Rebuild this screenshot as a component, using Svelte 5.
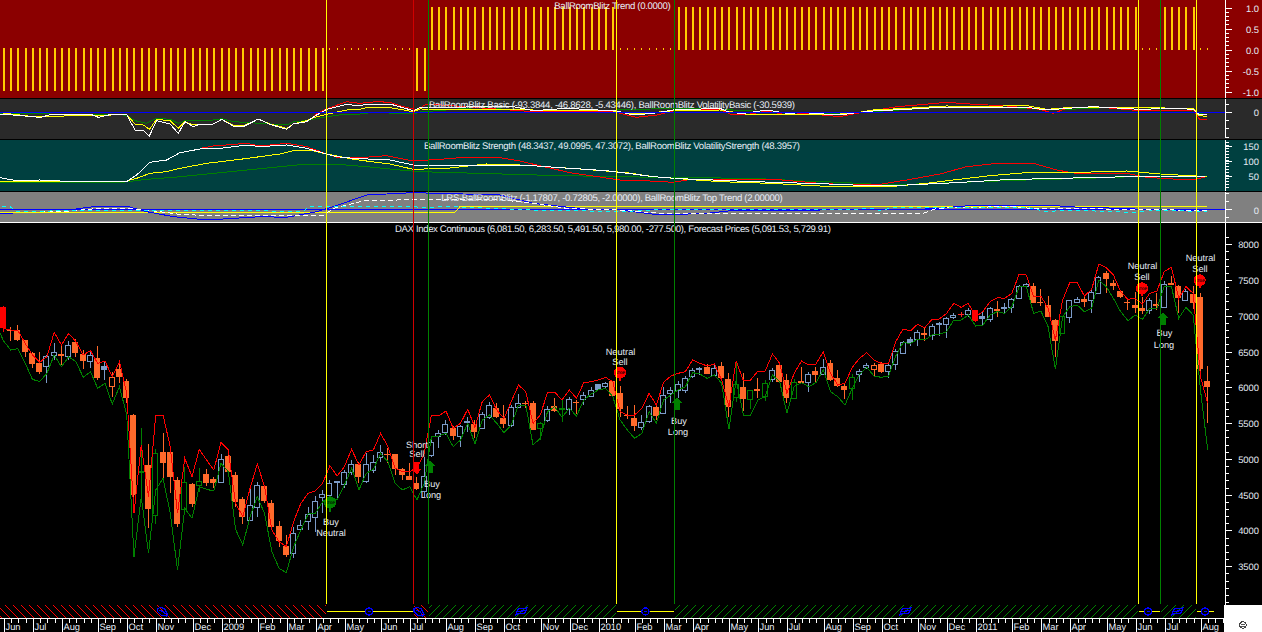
<script lang="ts">
  // DAX weekly chart with the BallRoomBlitz indicator panes.
  // Prices and lines are kept in page pixels: each table is measured from a
  // 3x crop, so sec()/seg() scale it back and add the crop offset.
  const step = 7.255;
  const cx = (i: number) => Math.floor(3.4 + step * i);

  const sec = (off: number, rows: any[]) =>
    rows.map(([t, a, b, c, d]) => ({
      t,
      wt: off + a / 3,
      bt: off + b / 3,
      bb: off + c / 3,
      wb: off + d / 3,
    }));

  const candles = [
    ...sec(300, [
      ["r",18,22,85,95],["o",80,90,94,122],["o",75,90,120,122],["o",120,120,155,170],["o",155,160,192,205],
      ["o",155,190,217,222],["h",165,168,200,248],["h",130,157,167,180],["o",135,162,167,195],["h",122,137,170,180],
      ["o",118,127,158,170],["o",150,162,183,208],["h",155,167,184,205],["o",138,175,235,240],["s",185,198,210,240],
      ["x",215,232,260,290],["o",185,207,232,248],["o",238,243,293,310],["o",343,345,585,640],["g",385,514,516,590],
      ["o",432,495,627,685],["g",448,460,645,672],["o",400,456,488,545],["o",440,456,530,578],["o",530,540,672,680],
      ["g",500,547,627,635],["o",550,552,612,622],["g",505,544,556,575],["o",508,522,550,558],["o",530,537,548,565],
      ["h",462,478,547,550],["o",458,468,515,520],["o",517,525,605,620],["o",590,598,650,672],["h",565,616,661,662],
      ["h",545,556,622,650],["o",555,558,603,608],["o",600,610,682,690],["o",662,678,722,740],["o",705,739,764,770],
      ["h",680,700,761,775],["h",660,676,688,695],["h",620,644,665,690],["h",588,604,652,695],
    ]),
    ...sec(340, [
      ["h",450,463,473,520],["h",420,430,467,500],["h",425,425,427,480],["h",390,398,433,445],["h",360,373,398,405],
      ["o",365,372,410,428],["h",340,373,425,428],["h",345,368,392,400],["h",315,338,353,365],["o",325,341,344,368],
      ["o",342,342,388,405],["o",385,388,405,420],["o",370,408,420,420],["o",410,428,446,450],["h",350,410,455,470],
      ["h",290,307,347,350],["h",270,280,290,325],["h",240,253,278,285],["o",258,265,288,300],["h",255,258,290,320],
      ["h",230,245,248,275],["o",240,252,276,295],["h",215,223,266,266],["h",185,195,233,238],["o",190,205,230,235],
      ["o",195,234,251,265],["h",195,202,255,262],["h",162,190,202,205],["o",182,189,193,205],["o",182,190,270,270],
      ["g",245,250,265,300],["h",198,208,242,245],["o",175,198,212,215],["g",180,204,206,245],["h",170,178,207,225],
      ["o",180,185,190,222],["h",155,166,179,195],["h",140,150,168,172],["s",133,133,149,150],["h",125,130,140,148],
      ["o",122,123,168,170],["o",137,160,207,232],["o",198,224,226,238],["o",195,234,258,272],["h",225,247,261,270],
      ["h",195,199,243,250],["o",198,202,227,240],["h",140,167,219,222],["h",142,150,160,190],["h",122,132,150,175],
    ]),
    ...sec(280, [
      ["h",288,295,330,340],["h",265,270,290,295],["h",262,264,267,285],["o",252,260,281,283],["h",255,265,285,285],
      ["o",245,258,293,295],["o",278,297,381,412],["g",248,313,352,365],["o",280,322,358,392],["g",330,332,358,388],
      ["o",293,327,334,355],["g",300,310,350,362],["h",265,272,298,305],["o",245,255,306,308],["o",282,300,353,368],
      ["g",298,307,356,358],["o",262,303,308,310],["h",275,283,308,337],["o",262,273,285,310],["h",238,262,282,285],
      ["o",240,250,299,302],["o",270,295,318,320],["o",310,318,329,357],["g",282,292,326,360],["h",267,274,284,305],
      ["h",250,256,263,268],["x",250,257,268,288],["o",245,252,276,278],["h",250,256,275,295],["h",208,215,253,270],
      ["h",183,188,220,222],["s",172,178,188,198],["h",150,157,178,198],["o",140,158,165,182],["h",132,138,165,180],
      ["s",125,130,136,168],["h",112,115,134,175],["h",98,106,113,118],["R",95,102,104,112],["h",85,92,104,110],
    ]),
    ...sec(230, [
      ["r",240,240,272,275],["s",245,257,266,288],["h",232,235,268,275],["o",212,238,243,260],["h",218,231,233,248],
      ["h",205,208,233,248],["h",165,170,205,205],["h",158,163,170,172],["o",160,168,218,220],["o",178,217,219,228],
      ["o",198,225,260,262],["o",268,270,332,380],["g",258,258,310,312],["h",210,211,263,280],["h",200,207,217,220],
      ["o",198,207,216,232],["h",180,187,212,250],["h",138,142,190,192],["o",122,128,147,190],["o",150,160,167,180],
      ["o",180,183,200,205],["o",208,216,218,240],["o",185,226,233,250],["o",200,233,243,252],["h",205,210,242,252],
      ["o",190,223,229,240],["h",152,163,231,232],["o",138,160,164,165],["o",165,168,203,250],["h",178,184,211,214],
      ["o",168,192,219,238],["o",190,201,416,440],["o",408,453,472,578],
    ]),
  ];

  const band = (x0y: number[], off: number[][]) => {
    const ys = off.flatMap(([o, ...vals]) => vals.map((v) => o + v / 3));
    return [x0y, ...ys.map((y, i) => [3.4 + step * i, y])].map((p) => p.join(",")).join(" ");
  };

  const redBand = band([0, 322], [
    [300,85,90,92,130,165,187,170,97,135,100,125,165,152,190,183,230,185,280,640,435,590,345,345,440,640,475,530,448,480,510,427,450,610,650,565,492,560,690,725,740,665,610,580,573,550],
    [340,377,408,380,328,375,335,330,280,320,385,395,395,385,340,225,228,213,265,250,208,262,185,165,210,235,185,135,155,250,225,158,157,180,150,175,128,125,120,112,125,215,225,225,205,160,195,127,108,100],
    [280,275,240,250,258,252,300,380,243,302,300,273,273,222,250,340,280,243,255,252,215,280,315,310,262,235,218,240,250,250,185,147,153,133,143,118,117,100,70,82,70],
    [230,260,245,215,203,205,190,133,135,200,198,235,330,210,157,157,198,178,102,113,135,185,208,205,222,190,183,125,112,205,170,190,440,520],
  ]);
  const greenBand = band([0, 333], [
    [300,122,150,146,190,238,245,220,165,200,170,185,232,215,265,250,312,260,345,770,590,760,570,535,640,810,625,655,560,568,573,490,515,688,735,650,590,640,755,805,818,740,690,642,640,605],
    [340,470,480,435,385,450,400,388,340,365,430,450,440,480,430,290,288,280,320,300,250,312,240,225,250,278,255,195,195,315,295,215,200,232,205,228,180,162,150,145,170,240,270,295,280,215,250,180,165,150],
    [280,320,278,282,295,285,310,448,300,405,405,360,350,285,305,400,320,308,320,308,270,335,350,375,325,283,262,288,292,288,228,188,190,178,180,165,163,155,120,120,105],
    [230,288,285,255,245,250,230,170,170,250,243,290,418,260,230,225,245,235,150,170,205,245,272,255,268,235,235,170,170,265,232,255,480,660],
  ]);

  // indicator lines: one string per 3x crop, crop origin 0 / 420 / 840
  function seg(...parts: string[]) {
    let last = -1;
    const out: string[] = [];
    parts.forEach((s, k) => {
      for (const p of s.trim().split(/\s+/)) {
        const [a, b] = p.split(",").map(Number);
        const x = k * 420 + a / 3;
        if (x > last) {
          out.push(x + "," + b / 3);
          last = x;
        }
      }
    });
    return out.join(" ");
  }

  const basic = [
    { c: "#008000", p: seg("0,340 370,345 385,350 405,362 440,370 470,355 510,358 535,370 555,362 640,360 665,356 700,365 860,375 880,365 920,362 980,350 1040,342 1080,342 1120,337 1240,342 1260,336", "180,322 340,335 590,330 760,325 900,328 1100,338 1260,340", "100,335 300,322 500,322 640,330 800,323 1040,325 1080,340 1100,338") },
    { c: "#ff0000", p: seg("930,360 950,340 985,325 1040,305 1080,310 1130,305 1170,307 1210,320 1250,330", "20,312 340,335 580,335 650,352 710,345 760,333 900,328 930,342 975,345 1040,333 1100,345 1150,340 1260,350", "50,340 100,332 170,320 230,315 320,307 390,312 500,318 600,328 640,340 680,325 760,320 900,332 1060,330 1080,360 1100,357") },
    { c: "#ffff00", p: seg("0,338 100,350 380,344 405,372 430,375 448,388 470,358 510,362 535,385 555,365 580,375 640,372 665,358 700,375 730,378 775,357 810,372 860,385 880,372 920,362 950,350 985,342 1040,330 1080,328 1100,323 1170,323 1240,335 1260,327", "340,330 580,333 650,342 760,332 900,330 975,342 1100,342 1260,342", "50,338 100,330 200,325 320,318 450,320 550,315 620,328 680,323 800,322 1060,325 1075,345 1100,350") },
    { c: "#ffffff", p: seg("0,342 40,345 100,350 120,353 150,344 190,345 210,342 270,342 295,352 330,344 380,344 405,390 430,392 448,408 470,362 510,372 535,400 555,365 580,380 600,372 640,372 665,358 700,378 730,380 775,357 810,373 860,388 880,372 920,365 950,345 980,328 1040,313 1080,318 1100,312 1170,312 1240,332 1260,322", "280,320 340,332 440,325 590,333 640,345 700,340 760,330 900,325 930,338 970,340 1040,330 1100,340 1150,338 1260,345", "50,338 100,333 200,328 300,322 400,322 560,322 620,330 680,325 760,320 900,328 1000,325 1060,328 1075,342 1100,345") },
  ];

  const strength = [
    { c: "#008000", p: seg("0,548 360,548 440,538 520,532 640,520 740,510 840,500 920,492 1000,492 1100,500 1200,510 1260,515", "350,525 580,530 800,533 1000,535 1150,543 1260,547", "110,553 200,553 420,545 560,540 740,535 880,530 1040,528") },
    { c: "#ff0000", p: seg("600,445 640,438 740,430 780,438 860,430 920,440 980,462 1010,472 1080,473 1160,467 1240,483", "60,478 120,473 240,473 300,483 350,495 450,518 600,540 690,543 760,547 820,537 1050,537 1200,550 1260,553", "120,553 200,540 300,522 380,500 470,490 580,490 650,510 720,522 860,520 920,532 1000,537 1070,537 1100,530") },
    { c: "#ffff00", p: seg("0,545 380,543 410,535 450,520 500,515 540,505 620,490 720,478 840,462 880,452 930,450 980,462 1060,478 1170,492 1240,508", "80,505 200,492 300,495 350,498 480,507 620,518 700,530 800,538 900,545 1050,550 1200,558 1260,558", "170,558 260,550 340,540 450,527 570,517 640,518 720,517 860,513 960,522 1050,527 1100,530") },
    { c: "#ffffff", p: seg("0,533 50,542 120,540 220,545 380,545 410,525 450,487 500,480 540,458 600,447 660,445 740,435 780,440 860,435 920,445 980,462 1010,470 1060,475 1170,480 1240,495", "200,495 350,498 450,505 560,512 700,530 780,536 1000,545 1260,553", "100,558 200,555 350,548 480,540 640,535 760,533 860,530 1100,528") },
  ];

  const lrsBlue = seg("220,628 280,620 385,620 440,635 520,650 620,660 780,650 860,652 950,635 1000,620 1100,585 1240,578", "240,585 340,610 500,628 600,630 720,645 860,640 950,630 1200,630 1260,628", "240,628 290,625 400,616 630,616 720,622 850,625 900,628 1100,632");
  const lrsWhite = seg("120,633 210,633 300,625 385,625 480,635 530,642 620,647 970,647 1000,625 1090,603 1260,598", "230,598 340,610 440,625 600,630 720,640 1260,640", "250,640 290,625 370,622 520,620 570,625 900,628 1100,632");
  const lrsCyan = seg("5,620 30,620 50,635 300,630 650,630 910,635 925,620 1240,620 1260,622", "100,620 340,630 600,635 740,628 1260,630", "100,625 120,632 160,622 560,622 620,635 680,630 880,637 960,630 1100,635");

  // Trend value per week: -1 until Apr 09, then alternating flat / long.
  const trend = candles.map((_, i) => {
    if (i <= 44 || i === 57 || i === 58) return -1;
    if (i <= 56 || (i >= 85 && i <= 92) || (i >= 157 && i <= 159) || i >= 165) return 0;
    return 1;
  });

  const months: [string, number][] = [
    ["Jun",0],["Jul",4],["Aug",8],["Sep",13],["Oct",17],["Nov",21],["Dec",26],["2009",30],["Feb",35],["Mar",39],["Apr",43],
    ["May",47],["Jun",52],["Jul",56],["Aug",61],["Sep",65],["Oct",69],["Nov",74],["Dec",78],["2010",82],["Feb",87],["Mar",91],
    ["Apr",95],["May",100],["Jun",104],["Jul",108],["Aug",113],["Sep",117],["Oct",121],["Nov",126],["Dec",130],["2011",134],
    ["Feb",139],["Mar",143],["Apr",147],["May",152],["Jun",156],["Jul",160],["Aug",165],
  ];
  const weeks = Array.from({ length: 169 }, (_, i) => i);

  const signals = [
    { x: 326.5, c: "#ffff00" }, { x: 413.5, c: "#d00000" }, { x: 428.5, c: "#008000" },
    { x: 616.5, c: "#ffff00" }, { x: 674.5, c: "#008000" }, { x: 1138.5, c: "#ffff00" },
    { x: 1160.5, c: "#008000" }, { x: 1196.5, c: "#ffff00" },
  ];

  // hatching of the position strip: 1px stair steps, 8px apart, as one path
  function hatch(spans: number[][], up: boolean) {
    let d = "";
    for (const [x0, x1] of spans) {
      for (let x = x0; x < x1; x++) {
        for (let row = 0; row < 13; row++) {
          const phase = up ? x + row - 7 : x - row - 5;
          if (((phase % 8) + 8) % 8 === 0) d += `M${x} ${605 + row}h1v1h-1z`;
        }
      }
    }
    return d;
  }
  const hatchRed = hatch([[0, 326], [414, 428]], false);
  const hatchGreen = hatch([[429, 616], [675, 1138], [1161, 1196]], true);

  const priceLabels = [8000, 7500, 7000, 6500, 6000, 5500, 5000, 4500, 4000, 3500];
  const priceY = (p: number) => 244.7 + (8000 - p) * 0.07156;
  const priceTicks = Array.from({ length: 53 }, (_, i) => 8100 - i * 100);

  const range = (from: number, to: number, d: number) => {
    const a = [];
    for (let v = from; v <= to + 0.01; v += d) a.push(v);
    return a;
  };

  const stops = [{ x: 620, y: 372.7 }, { x: 1142, y: 288.3 }, { x: 1199.7, y: 280.3 }];
  const buyArrows = [{ x: 430, y: 460 }, { x: 677, y: 397 }, { x: 1163, y: 312 }];
  const labels = [
    { x: 331, y: 524.5, t: "Buy" }, { x: 331, y: 535.5, t: "Neutral" },
    { x: 417, y: 447.5, t: "Short" }, { x: 417, y: 457, t: "Sell" },
    { x: 432, y: 487, t: "Buy" }, { x: 431, y: 497.5, t: "Long" },
    { x: 620.5, y: 354.5, t: "Neutral" }, { x: 620, y: 365, t: "Sell" },
    { x: 679, y: 423.5, t: "Buy" }, { x: 678, y: 434.5, t: "Long" },
    { x: 1142.5, y: 269, t: "Neutral" }, { x: 1142, y: 280, t: "Sell" },
    { x: 1164.5, y: 336, t: "Buy" }, { x: 1164, y: 347.5, t: "Long" },
    { x: 1200.5, y: 261, t: "Neutral" }, { x: 1200, y: 272, t: "Sell" },
  ];

  const colors: Record<string, string> = {
    o: "#ff6a2b", x: "#ff6a2b", h: "#7b9bc8", s: "#7b9bc8", g: "#008000", r: "#ff0000", R: "#ff2020",
  };
</script>

<div class="chart">
  <div class="pane trend">
    <svg viewBox="0 0 1262 98" width="1262" height="98">
      {#each trend as v, i}
        {#if v === 1}
          <rect x={cx(i)} y="7" width="2" height="43" fill="#ffcc00" />
        {:else if v === -1}
          <rect x={cx(i)} y="48" width="2" height="43" fill="#ffcc00" />
        {:else}
          <rect x={cx(i)} y="48" width="1" height="2" fill="#ffcc00" />
        {/if}
      {/each}
      <text class="title" x="554.3" y="9.3" textLength="116.5">BallRoomBlitz Trend (0.0000)</text>
      <line class="axis" x1="1225.5" x2="1225.5" y1="0" y2="98" />
      {#each range(8, 92, 4.2) as y, i}
        <line class="axis" x1="1226" x2={i % 5 === 0 ? 1232 : 1229} y1={y} y2={y} />
      {/each}
      {#each [["1.0", 8], ["0.5", 29], ["0.0", 50], ["-0.5", 71], ["-1.0", 92]] as [t, y]}
        <text class="tick" x="1259" y={+y + 3.5}>{t}</text>
      {/each}
    </svg>
  </div>

  <div class="pane basic">
    <svg viewBox="0 99 1262 40" width="1262" height="40">
      {#each basic as l}
        <polyline points={l.p} stroke={l.c} />
      {/each}
      <line x1="0" x2="1226" y1="112.5" y2="112.5" stroke="#0000ff" stroke-width="1" />
      <text class="title" x="429" y="108.3" textLength="366">BallRoomBlitz Basic (-93.3844, -46.8628, -5.43446), BallRoomBlitz VolatilityBasic (-30.5939)</text>
      <line class="axis" x1="1225.5" x2="1225.5" y1="99" y2="138" />
      {#each [104, 120.5, 128.5, 137] as y}
        <line class="axis" x1="1226" x2="1229" y1={y} y2={y} />
      {/each}
      <line class="axis" x1="1226" x2="1232" y1="112.5" y2="112.5" />
      <text class="tick" x="1259" y="116">0</text>
    </svg>
  </div>

  <div class="pane strength">
    <svg viewBox="0 140 1262 51" width="1262" height="51">
      {#each strength as l}
        <polyline points={l.p} stroke={l.c} />
      {/each}
      <text class="title" x="424" y="149" textLength="376">BallRoomBlitz Strength (48.3437, 49.0995, 47.3072), BallRoomBlitz VolatilityStrength (48.3957)</text>
      <line class="axis" x1="1225.5" x2="1225.5" y1="140" y2="191" />
      {#each range(142, 189, 3) as y}
        <line class="axis" x1="1226" x2="1229" y1={y} y2={y} />
      {/each}
      {#each [["150", 146.7], ["100", 161.7], ["50", 176.7]] as [t, y]}
        <line class="axis" x1="1226" x2="1232" y1={y} y2={y} />
        <text class="tick" x="1259" y={+y + 3.5}>{t}</text>
      {/each}
    </svg>
  </div>

  <div class="pane lrs">
    <svg viewBox="0 192 1262 30" width="1262" height="30">
      <line x1="0" x2="13" y1="213" y2="213" stroke="#0000ff" />
      <line x1="0" x2="1226" y1="209.5" y2="209.5" stroke="#0000ff" />
      <polyline points="0,212 455,212 460,206.7 1206.7,206.7" stroke="#ffff00" />
      <polyline points={lrsBlue} stroke="#0000ff" />
      <polyline points={lrsWhite} stroke="#ffffff" stroke-dasharray="5 3" />
      <polyline points={lrsCyan} stroke="#00ffff" stroke-dasharray="4 4" />
      <text class="title" x="441.3" y="200.7" textLength="341.4">LRS-BallRoomBlitz (-1.17807, -0.72805, -2.00000), BallRoomBlitz Top Trend (2.00000)</text>
      <line class="axis" x1="1225.5" x2="1225.5" y1="192" y2="222" />
      {#each [193, 201.5, 217.5] as y}
        <line class="axis" x1="1226" x2="1229" y1={y} y2={y} />
      {/each}
      <line class="axis" x1="1226" x2="1232" y1="209.5" y2="209.5" />
      <text class="tick" x="1259" y="214">0</text>
    </svg>
  </div>

  <div class="main">
    <svg viewBox="0 223 1262 382" width="1262" height="382">
      {#each candles as k, i}
        {@const c = cx(i)}
        {#if k.t === "h" || k.t === "g" || k.t === "x"}
          <line x1={c + 0.5} x2={c + 0.5} y1={k.wt} y2={k.bt} stroke={colors[k.t]} />
          <line x1={c + 0.5} x2={c + 0.5} y1={k.bb} y2={k.wb} stroke={colors[k.t]} />
          <rect class="hollow" x={c - 2.5} y={k.bt} width="5" height={Math.max(k.bb - k.bt, 1)} stroke={colors[k.t]} />
        {:else}
          <line x1={c + 0.5} x2={c + 0.5} y1={k.wt} y2={k.wb} stroke={colors[k.t]} />
          <rect x={c - 3} y={k.bt} width="6" height={Math.max(k.bb - k.bt, 1)} fill={colors[k.t]} />
        {/if}
      {/each}
      <polyline points={greenBand} stroke="#008000" />
      <polyline points={redBand} stroke="#ff0000" />

      <g transform="translate(330 502.7)">
        <rect x="-1" y="4" width="2" height="5" fill="#008000" />
        <circle r="6" fill="#008000" />
        <text class="stop" y="1.3">STOP</text>
      </g>
      {#each stops as s}
        <g transform="translate({s.x} {s.y})">
          <rect x="-1" y="4" width="2" height="4" fill="#ff0000" />
          <circle r="6" fill="#ff0000" />
          <text class="stop" y="1.3">STOP</text>
        </g>
      {/each}
      {#each buyArrows as a}
        <path d="M0 0 L5 6 L2.5 6 L2.5 13 L-2.5 13 L-2.5 6 L-5 6 Z" transform="translate({a.x} {a.y})" fill="#008000" />
      {/each}
      <path d="M0 13 L5 7 L2.5 7 L2.5 0 L-2.5 0 L-2.5 7 L-5 7 Z" transform="translate(416.7 461.7)" fill="#ff0000" />
      {#each labels as l}
        <text class="note" x={l.x} y={l.y}>{l.t}</text>
      {/each}

      <text class="title" x="395" y="232" textLength="436">DAX Index Continuous (6,081.50, 6,283.50, 5,491.50, 5,980.00, -277.500), Forecast Prices (5,091.53, 5,729.91)</text>

      <line class="axis" x1="1225.5" x2="1225.5" y1="223" y2="605" />
      {#each priceTicks as p}
        <line class="axis" x1="1226" x2="1229" y1={priceY(p)} y2={priceY(p)} />
      {/each}
      {#each priceLabels as p}
        <line class="axis" x1="1226" x2="1232" y1={priceY(p)} y2={priceY(p)} />
        <text class="tick" x="1259" y={priceY(p) + 3.5}>{p}</text>
      {/each}
    </svg>
  </div>

  <div class="bottom">
    <div class="timeline">
      <svg viewBox="0 605 1224 27" width="1224" height="27">
        <path d={hatchRed} fill="#ff0000" />
        <path d={hatchGreen} fill="#008000" />
        <g stroke="#ffff00">
          <line x1="327" x2="413" y1="611.5" y2="611.5" />
          <line x1="617" x2="674" y1="611.5" y2="611.5" />
          <line x1="1139" x2="1160" y1="611.5" y2="611.5" />
          <line x1="1197" x2="1214" y1="611.5" y2="611.5" />
        </g>

        {#each [369, 645.5, 1148, 1205] as x}
          <g class="mark" transform="translate({x} 611.5)">
            <circle r="3.6" fill="#000" />
            <line x1="-1.5" x2="1.5" y1="0" y2="0" />
          </g>
        {/each}
        {#each [162.5, 419] as x}
          <g class="mark" transform="translate({x} 611.5)">
            <path d="M-5 -3 L-2 -4 L2 -3 L5 3 L4 4.5 L-1 4 L-5 0 Z M-3 -1 L1 0 L3 3" fill="none" />
          </g>
        {/each}
        {#each [521, 905, 1177] as x}
          <g class="mark" transform="translate({x} 612)">
            <path d="M-5.5 4 L-3 -3 L6 -4 L4 1 L-4 2 M-3 -0.5 L4.5 -1.5" fill="none" />
          </g>
        {/each}

        <line class="axis" x1="0" x2="1224" y1="618.5" y2="618.5" />
        {#each weeks as w}
          {#if 3.4 + step * w < 1224}
            <line class="axis" x1={cx(w) + 1.5} x2={cx(w) + 1.5} y1="618" y2="623" />
          {/if}
        {/each}
        {#each months as [name, w]}
          <line class="axis" x1={cx(w) + 1.5} x2={cx(w) + 1.5} y1="618" y2="632" />
          <text class="month" x={cx(w) + 2.5} y="629.8">{name}</text>
        {/each}
      </svg>
    </div>
    <div class="corner">
      <svg viewBox="0 0 10 10" width="10" height="10">
        <circle cx="5" cy="5" r="3.2" fill="none" stroke="#444" />
        <path d="M3.2 4 H6.8 M3.2 6 H6.8" stroke="#444" stroke-width="0.9" />
      </svg>
    </div>
  </div>

  <svg class="signals" viewBox="0 0 1262 604" width="1262" height="604">
    {#each signals as s}
      <line x1={s.x} x2={s.x} y1="0" y2="604" stroke={s.c} />
    {/each}
  </svg>
</div>

<style>
  :global(body) {
    margin: 0;
    background: #000;
  }
  .chart {
    position: relative;
    display: flex;
    flex-direction: column;
    width: 1262px;
    height: 632px;
    overflow: hidden;
    background: #000;
    font-family: "Liberation Sans", Arial, sans-serif;
  }
  svg {
    display: block;
    shape-rendering: crispEdges;
  }
  .pane {
    flex: 0 0 auto;
    border-bottom: 1px solid #000;
  }
  .trend { background: #8b0000; }
  .basic { background: #2a2a2a; }
  .strength { background: #004040; }
  .lrs {
    background: #808080;
    border-bottom-color: #fff;
  }
  .main {
    flex: 0 0 382px;
    background: #000;
  }
  .bottom {
    display: flex;
    flex: 0 0 27px;
  }
  .timeline {
    flex: 0 0 1224px;
  }
  .corner {
    flex: 1;
    display: flex;
    align-items: flex-end;
    justify-content: center;
    padding: 0 0 2px 0;
    background: #fff;
  }
  .signals {
    position: absolute;
    left: 0;
    top: 0;
    pointer-events: none;
  }
  polyline {
    fill: none;
    stroke-width: 1;
  }
  .hollow {
    fill: none;
  }
  .axis {
    stroke: #fff;
    stroke-width: 1;
  }
  .mark {
    stroke: #0000ff;
    stroke-width: 1.2;
  }
  text {
    font-size: 9.6px;
    fill: #e6ecf5;
    text-rendering: geometricPrecision;
    font-family: "Liberation Sans", Arial, sans-serif;
  }
  .tick {
    text-anchor: end;
    font-size: 9.4px;
  }
  .note {
    text-anchor: middle;
    font-size: 9.2px;
  }
  .month {
    font-size: 9.3px;
  }
  .stop {
    text-anchor: middle;
    font-size: 3.6px;
    font-weight: bold;
    fill: #000;
  }
</style>
